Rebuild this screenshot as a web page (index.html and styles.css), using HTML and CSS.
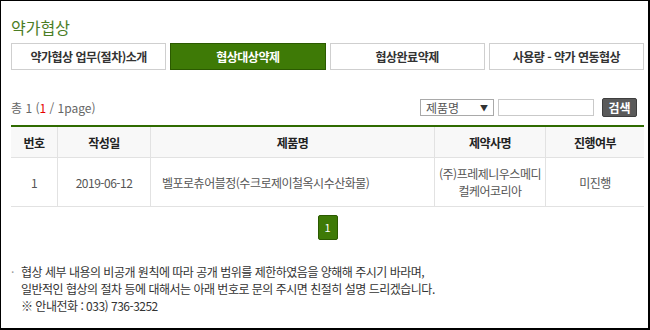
FILE: index.html
```html
<!DOCTYPE html>
<html lang="ko">
<head>
    <meta charset="UTF-8">
    <title>약가협상</title>
    <link rel="stylesheet" href="styles.css">
</head>
<body>

<div class="page">
    <h1 class="title">약가협상</h1>

    <ul class="tabs">
        <li>약가협상 업무(절차)소개</li>
        <li class="active">협상대상약제</li>
        <li>협상완료약제</li>
        <li>사용량 - 약가 연동협상</li>
    </ul>

    <div class="toolbar">
        <p class="count">총 1 (<span class="cur">1</span> / 1page)</p>
        <form class="search">
            <div class="select">제품명 <span class="arrow">▼</span></div>
            <input type="text" class="keyword">
            <button type="button">검색</button>
        </form>
    </div>

    <table class="list">
        <thead>
            <tr>
                <th class="c-no">번호</th>
                <th class="c-date">작성일</th>
                <th>제품명</th>
                <th class="c-comp">제약사명</th>
                <th class="c-state">진행여부</th>
            </tr>
        </thead>
        <tbody>
            <tr>
                <td>1</td>
                <td>2019-06-12</td>
                <td class="left">벨포로츄어블정(수크로제이철옥시수산화물)</td>
                <td>(주)프레제니우스메디<br>컬케어코리아</td>
                <td>미진행</td>
            </tr>
        </tbody>
    </table>

    <div class="paging">
        <a class="on">1</a>
    </div>

    <div class="notice">
        <p><span class="dot">·</span>협상 세부 내용의 비공개 원칙에 따라 공개 범위를 제한하였음을 양해해 주시기 바라며,</p>
        <p>일반적인 협상의 절차 등에 대해서는 아래 번호로 문의 주시면 친절히 설명 드리겠습니다.</p>
        <p>※ 안내전화 : 033) 736-3252</p>
    </div>
</div>

</body>
</html>
```

FILE: styles.css
```css
html, body {
    margin: 0;
    padding: 0;
}

body {
    width: 650px;
    height: 330px;
    box-sizing: border-box;
    border-top: 1px solid #000;
    border-left: 1px solid #000;
    border-right: 2px solid #000;
    border-bottom: 2px solid #000;
    font-family: "Noto Sans CJK KR", "Noto Sans", sans-serif;
    font-size: 12px;
    color: #333;
    background: #fff;
    overflow: hidden;
}

.page {
    padding: 0 4px 0 10px;
}

.title {
    margin: 0;
    padding-top: 16px;
    height: 26px;
    font-size: 16px;
    font-weight: normal;
    line-height: 20px;
    color: #4b7d25;
}

.tabs {
    list-style: none;
    margin: 0;
    padding: 0;
    display: flex;
    gap: 4px;
}

.tabs li {
    flex: 1;
    height: 25px;
    line-height: 25px;
    border: 1px solid #cfcfcf;
    text-align: center;
    font-size: 12px;
    font-weight: bold;
    letter-spacing: -0.5px;
    color: #333;
    background: #fff;
}

.tabs li.active {
    background: #3e7a06;
    border-color: #2b5a00;
    color: #fff;
}

.toolbar {
    display: flex;
    justify-content: space-between;
    align-items: center;
    height: 19px;
    margin-top: 28px;
    padding-right: 7px;
}

.count {
    margin: 0;
    color: #666;
    font-size: 12px;
    line-height: 19px;
}

.count .cur {
    color: #e60000;
}

.search {
    display: flex;
    align-items: center;
    margin: 0;
}

.select {
    width: 62px;
    height: 15px;
    line-height: 15px;
    border: 1px solid #a9a9a9;
    padding: 0 5px;
    font-size: 12px;
    color: #555;
    display: flex;
    justify-content: space-between;
}

.select .arrow {
    font-size: 8px;
    color: #333;
}

.keyword {
    width: 94px;
    height: 15px;
    margin: 0 0 0 4px;
    border: 1px solid #c9c9c9;
    padding: 0;
}

button {
    margin-left: 8px;
    width: 35px;
    height: 19px;
    padding: 0;
    border: 1px solid #3e3e3e;
    border-radius: 2px;
    background: #5a5a5a;
    color: #fff;
    font-family: inherit;
    font-size: 12px;
    font-weight: bold;
    line-height: 17px;
}

.list {
    width: 633px;
    margin-top: 8px;
    border-collapse: collapse;
    border-top: 2px solid #2f6b00;
    font-size: 12px;
    letter-spacing: -0.5px;
}

.list th {
    height: 30px;
    background: #f8f8f8;
    border-bottom: 1px solid #e2e2e2;
    border-left: 1px solid #e2e2e2;
    font-weight: bold;
    color: #222;
    padding: 0;
    line-height: 17px;
}

.list td {
    height: 48px;
    border-bottom: 1px solid #e2e2e2;
    border-left: 1px solid #e2e2e2;
    text-align: center;
    color: #555;
    padding: 0;
    line-height: 17px;
}

.list th:first-child,
.list td:first-child {
    border-left: none;
}

.list td.left {
    text-align: left;
    padding-left: 11px;
}

.c-no { width: 46px; }
.c-date { width: 92px; }
.c-comp { width: 110px; }
.c-state { width: 98px; }

.paging {
    display: flex;
    justify-content: center;
    margin-top: 8px;
}

.paging a {
    display: block;
    width: 18px;
    height: 23px;
    line-height: 23px;
    border: 1px solid #2b5a00;
    border-radius: 2px;
    background: #3e7a06;
    color: #fff;
    text-align: center;
    font-size: 11px;
}

.notice {
    margin-top: 23px;
    font-size: 12px;
    color: #333;
    letter-spacing: -0.5px;
}

.notice p {
    margin: 0;
    line-height: 17px;
    padding-left: 10px;
}

.notice p:first-child {
    padding-left: 0;
}

.notice .dot {
    display: inline-block;
    width: 10px;
    color: #999;
}
```
